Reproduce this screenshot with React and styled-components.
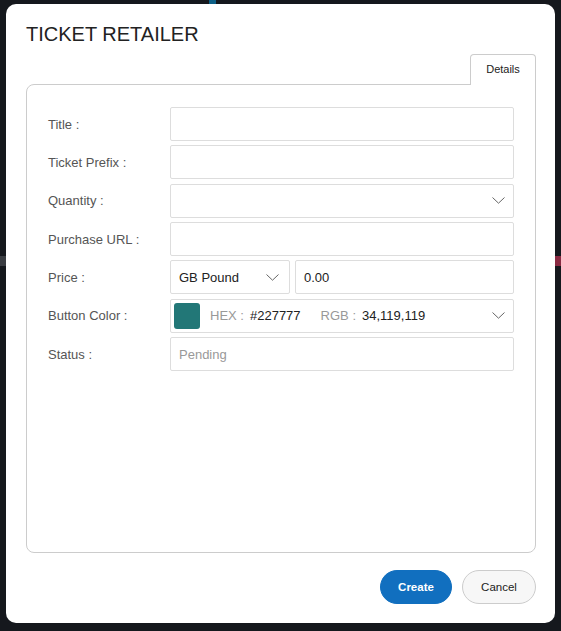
import React from 'react';
import styled, { createGlobalStyle } from 'styled-components';

const GlobalStyle = createGlobalStyle`
    html, body {
        margin: 0;
        padding: 0;
        background: #15181d;
        font-family: "Liberation Sans", Arial, sans-serif;
    }
    body {
        min-height: 631px;
        background:
            linear-gradient(90deg, transparent 0, transparent 209px, #0d5f86 209px, #0d5f86 216px, transparent 216px) top / 100% 4px no-repeat,
            linear-gradient(180deg, transparent 256px, #3a3d42 256px, #3a3d42 266px, transparent 266px) left / 6px 100% no-repeat,
            linear-gradient(180deg, transparent 256px, #8a2a42 256px, #8a2a42 266px, transparent 266px) right / 6px 100% no-repeat,
            #15181d;
    }
`;

const Overlay = styled.div`
    padding: 4px 6px 8px 6px;
`;

const Modal = styled.div`
    width: 549px;
    height: 619px;
    box-sizing: border-box;
    background: #fff;
    border-radius: 10px;
    padding: 18px 19px 19px 20px;
    display: flex;
    flex-direction: column;
`;

const Heading = styled.h2`
    margin: 0;
    font-size: 20px;
    line-height: 24px;
    font-weight: normal;
    color: #222;
`;

const TabBar = styled.div`
    display: flex;
    justify-content: flex-end;
    margin-top: 8px;
`;

const Tab = styled.div`
    height: 31px;
    width: 66px;
    box-sizing: border-box;
    border: 1px solid #ccc;
    border-bottom: none;
    border-radius: 4px 4px 0 0;
    background: #fff;
    display: flex;
    align-items: center;
    justify-content: center;
    font-size: 11px;
    color: #222;
    position: relative;
    z-index: 1;
    margin-bottom: -1px;
    padding-bottom: 2px;
`;

const Panel = styled.div`
    flex: 1;
    border: 1px solid #ccc;
    border-radius: 8px 0 8px 8px;
    padding: 22px 21px 0 21px;
    display: flex;
    flex-direction: column;
    gap: 4.35px;
`;

const Row = styled.div`
    display: grid;
    grid-template-columns: 122px 1fr;
    align-items: center;
    height: 34px;
`;

const Label = styled.div`
    font-size: 13px;
    color: #555;
`;

const Field = styled.div`
    height: 34px;
    box-sizing: border-box;
    border: 1px solid #ddd;
    border-radius: 2px;
    display: flex;
    align-items: center;
    padding: 0 ${p => (p.$swatch ? '4px 0 3px' : '8px')};
    font-size: 13px;
    color: ${p => (p.$muted ? '#999' : '#222')};
    flex: ${p => p.$width ? `0 0 ${p.$width}px` : '1'};
    min-width: 0;
    gap: 6px;
`;

const Split = styled.div`
    display: flex;
    gap: 5px;
`;

const Grow = styled.span`
    flex: 1;
`;

const Chevron = styled.svg`
    flex: 0 0 auto;
    margin-right: ${p => p.$offset || 0}px;
`;

const Swatch = styled.span`
    width: 26px;
    height: 26px;
    border-radius: 3px;
    background: ${p => p.$color};
    margin-right: 4px;
`;

const Key = styled.span`
    color: #999;
`;

const Value = styled.span`
    color: #222;
    margin-right: ${p => p.$space || 0}px;
`;

const Footer = styled.div`
    display: flex;
    justify-content: flex-end;
    gap: 10px;
    margin-top: 17px;
`;

const Button = styled.button`
    height: 34px;
    border-radius: 17px;
    font-family: inherit;
    font-size: 11.5px;
    padding: 0;
    width: ${p => p.$width}px;
    cursor: pointer;
    ${p => p.$primary ? `
        background: #116fbf;
        border: 1px solid #116fbf;
        color: #fff;
        font-weight: bold;
    ` : `
        background: #f7f7f7;
        border: 1px solid #ccc;
        color: #222;
    `}
`;

const Down = ({ offset }) => (
    <Chevron $offset={offset} width="13" height="7" viewBox="0 0 13 7">
        <polyline points="0.5,0.5 6.5,6.2 12.5,0.5" fill="none" stroke="#666" strokeWidth="1" />
    </Chevron>
);

const App = () => {
    return (
        <Overlay>
            <GlobalStyle />
            <Modal>
                <Heading>TICKET RETAILER</Heading>
                <TabBar>
                    <Tab>Details</Tab>
                </TabBar>
                <Panel>
                    <Row>
                        <Label>Title :</Label>
                        <Field />
                    </Row>
                    <Row>
                        <Label>Ticket Prefix :</Label>
                        <Field />
                    </Row>
                    <Row>
                        <Label>Quantity :</Label>
                        <Field>
                            <Grow />
                            <Down offset={0} />
                        </Field>
                    </Row>
                    <Row>
                        <Label>Purchase URL :</Label>
                        <Field />
                    </Row>
                    <Row>
                        <Label>Price :</Label>
                        <Split>
                            <Field $width={120}>
                                <Grow>GB Pound</Grow>
                                <Down offset={2} />
                            </Field>
                            <Field>0.00</Field>
                        </Split>
                    </Row>
                    <Row>
                        <Label>Button Color :</Label>
                        <Field $swatch>
                            <Swatch $color="#227777" />
                            <Key>HEX :</Key>
                            <Value $space={14}>#227777</Value>
                            <Key>RGB :</Key>
                            <Value>34,119,119</Value>
                            <Grow />
                            <Down offset={4} />
                        </Field>
                    </Row>
                    <Row>
                        <Label>Status :</Label>
                        <Field $muted>Pending</Field>
                    </Row>
                </Panel>
                <Footer>
                    <Button $primary $width={72}>Create</Button>
                    <Button $width={74}>Cancel</Button>
                </Footer>
            </Modal>
        </Overlay>
    );
};

export default App;
